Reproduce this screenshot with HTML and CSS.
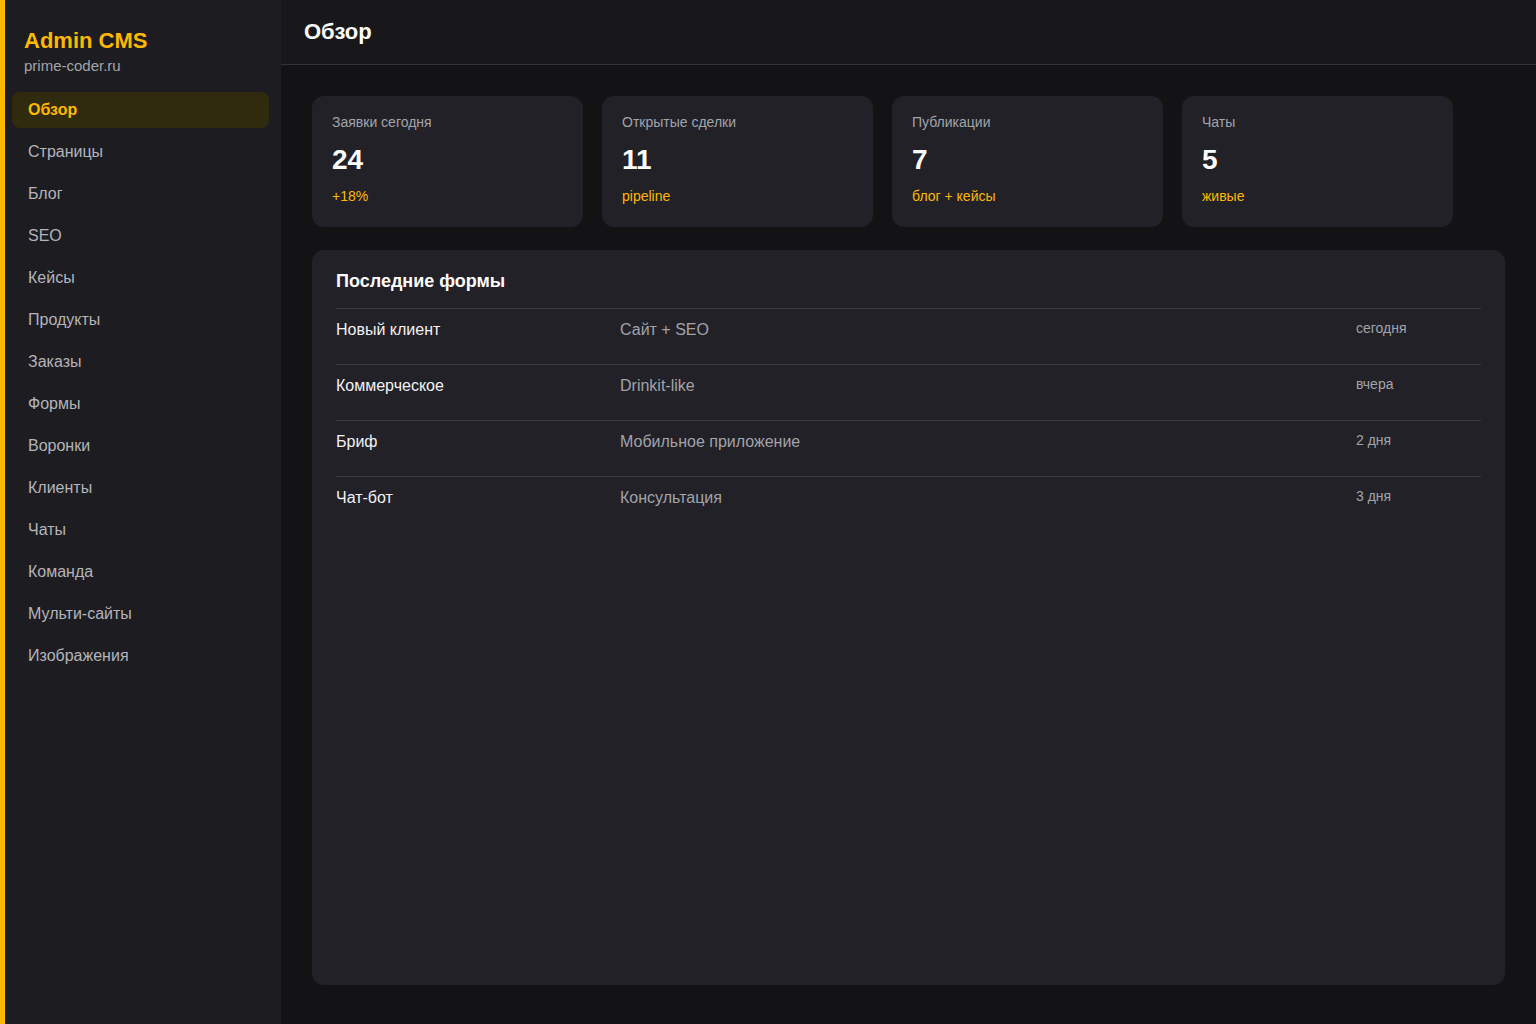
FILE: index.html
```html
<!DOCTYPE html>
<html lang="ru">
<head>
    <meta charset="UTF-8">
    <meta name="viewport" content="width=device-width, initial-scale=1.0">
    <title>Admin CMS - Обзор</title>
    <link rel="stylesheet" href="styles.css">
</head>
<body>
    <div class="layout">
        <aside class="sidebar">
            <div class="brand">
                <div class="brand-title">Admin CMS</div>
                <div class="brand-sub">prime-coder.ru</div>
            </div>
            <nav class="nav">
                <a class="nav-item active" href="#">Обзор</a>
                <a class="nav-item" href="#">Страницы</a>
                <a class="nav-item" href="#">Блог</a>
                <a class="nav-item" href="#">SEO</a>
                <a class="nav-item" href="#">Кейсы</a>
                <a class="nav-item" href="#">Продукты</a>
                <a class="nav-item" href="#">Заказы</a>
                <a class="nav-item" href="#">Формы</a>
                <a class="nav-item" href="#">Воронки</a>
                <a class="nav-item" href="#">Клиенты</a>
                <a class="nav-item" href="#">Чаты</a>
                <a class="nav-item" href="#">Команда</a>
                <a class="nav-item" href="#">Мульти-сайты</a>
                <a class="nav-item" href="#">Изображения</a>
            </nav>
        </aside>

        <div class="main">
            <header class="topbar">
                <h1>Обзор</h1>
            </header>

            <div class="content">
                <div class="stats">
                    <div class="stat-card">
                        <div class="stat-label">Заявки сегодня</div>
                        <div class="stat-value">24</div>
                        <div class="stat-note">+18%</div>
                    </div>
                    <div class="stat-card">
                        <div class="stat-label">Открытые сделки</div>
                        <div class="stat-value">11</div>
                        <div class="stat-note">pipeline</div>
                    </div>
                    <div class="stat-card">
                        <div class="stat-label">Публикации</div>
                        <div class="stat-value">7</div>
                        <div class="stat-note">блог + кейсы</div>
                    </div>
                    <div class="stat-card">
                        <div class="stat-label">Чаты</div>
                        <div class="stat-value">5</div>
                        <div class="stat-note">живые</div>
                    </div>
                </div>

                <section class="panel">
                    <h2>Последние формы</h2>
                    <div class="rows">
                        <div class="row">
                            <div class="row-name">Новый клиент</div>
                            <div class="row-type">Сайт + SEO</div>
                            <div class="row-date">сегодня</div>
                        </div>
                        <div class="row">
                            <div class="row-name">Коммерческое</div>
                            <div class="row-type">Drinkit-like</div>
                            <div class="row-date">вчера</div>
                        </div>
                        <div class="row">
                            <div class="row-name">Бриф</div>
                            <div class="row-type">Мобильное приложение</div>
                            <div class="row-date">2 дня</div>
                        </div>
                        <div class="row">
                            <div class="row-name">Чат-бот</div>
                            <div class="row-type">Консультация</div>
                            <div class="row-date">3 дня</div>
                        </div>
                    </div>
                </section>
            </div>
        </div>
    </div>
</body>
</html>
```

FILE: styles.css
```css
* {
    box-sizing: border-box;
}

body {
    margin: 0;
    background-color: #131315;
    color: #ffffff;
    font-family: "Liberation Sans", Arial, sans-serif;
}

.layout {
    display: flex;
    min-height: 100vh;
}

/* sidebar */
.sidebar {
    width: 281px;
    flex-shrink: 0;
    background-color: #1d1d21;
    box-shadow: inset 5px 0 0 #ffb800;
    padding: 28px 12px 16px 12px;
}

.brand {
    padding: 0 12px 17px 12px;
}

.brand-title {
    color: #ffb800;
    font-size: 22px;
    font-weight: bold;
    line-height: 26px;
}

.brand-sub {
    color: #a3a3aa;
    font-size: 15px;
    line-height: 18px;
    margin-top: 3px;
}

.nav {
    display: flex;
    flex-direction: column;
    gap: 6px;
}

.nav-item {
    display: block;
    height: 36px;
    line-height: 35px;
    padding: 0 16px;
    border-radius: 8px;
    color: #b4b4ba;
    font-size: 16px;
    text-decoration: none;
}

.nav-item.active {
    background-color: #302a0f;
    color: #ffb800;
    font-weight: bold;
}

/* main area */
.main {
    flex: 1;
    display: flex;
    flex-direction: column;
}

.topbar {
    height: 65px;
    background-color: #18181b;
    border-bottom: 1px solid #333338;
    padding: 0 23px;
    display: flex;
    align-items: center;
}

.topbar h1 {
    margin: 0;
    font-size: 22px;
    font-weight: bold;
    line-height: 26px;
}

.content {
    padding: 31px;
}

.stats {
    display: grid;
    grid-template-columns: repeat(4, 271px);
    gap: 19px;
}

.stat-card {
    background-color: #212127;
    border-radius: 12px;
    height: 131px;
    padding: 18px 20px;
}

.stat-label {
    color: #a3a3aa;
    font-size: 14px;
    line-height: 17px;
}

.stat-value {
    font-size: 28px;
    font-weight: bold;
    line-height: 32px;
    margin-top: 13px;
}

.stat-note {
    color: #ffb800;
    font-size: 14px;
    line-height: 17px;
    margin-top: 12px;
}

.panel {
    margin-top: 23px;
    background-color: #212127;
    border-radius: 12px;
    min-height: 735px;
    padding: 20px 24px;
}

.panel h2 {
    margin: 0 0 16px 0;
    font-size: 18px;
    font-weight: bold;
    line-height: 22px;
}

.row {
    display: grid;
    grid-template-columns: 284px 736px 1fr;
    height: 56px;
    padding-top: 11px;
    border-top: 1px solid #36363c;
    align-items: start;
}

.row-name {
    font-size: 16px;
    line-height: 19px;
    color: #f2f2f4;
}

.row-type {
    font-size: 16px;
    line-height: 19px;
    color: #a3a3aa;
}

.row-date {
    font-size: 14px;
    line-height: 17px;
    color: #a3a3aa;
}
```
